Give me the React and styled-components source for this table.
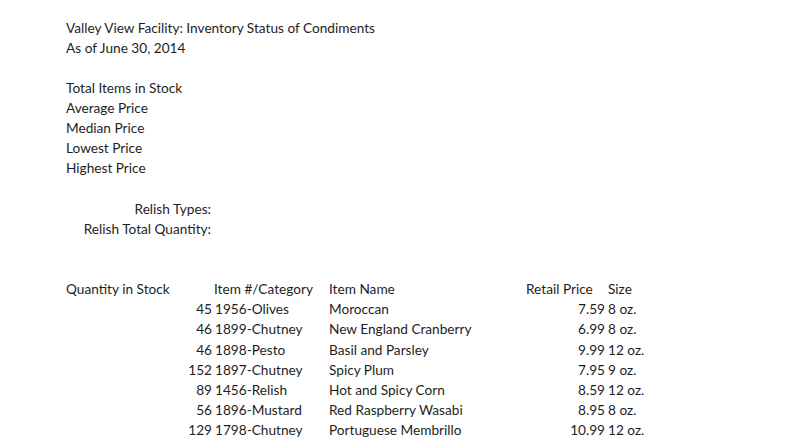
import React from "react";
import styled, { createGlobalStyle } from "styled-components";

const GlobalStyle = createGlobalStyle`
  body {
    margin: 0;
    background: #fff;
    font-family: Lato, "Open Sans", sans-serif;
    font-size: 13.65px;
    color: #1e1e1e;
  }
`;

const items = [
  { qty: 45, num: "1956-Olives", name: "Moroccan", price: "7.59", size: "8 oz." },
  { qty: 46, num: "1899-Chutney", name: "New England Cranberry", price: "6.99", size: "8 oz." },
  { qty: 46, num: "1898-Pesto", name: "Basil and Parsley", price: "9.99", size: "12 oz." },
  { qty: 152, num: "1897-Chutney", name: "Spicy Plum", price: "7.95", size: "9 oz." },
  { qty: 89, num: "1456-Relish", name: "Hot and Spicy Corn", price: "8.59", size: "12 oz." },
  { qty: 56, num: "1896-Mustard", name: "Red Raspberry Wasabi", price: "8.95", size: "8 oz." },
  { qty: 129, num: "1798-Chutney", name: "Portuguese Membrillo", price: "10.99", size: "12 oz." },
  { qty: 74, num: "1895-Relish", name: "Sweet Pepper and Onion", price: "6.59", size: "8 oz." },
];

const Page = styled.div`
  padding: 18px 0 0 66px;
  height: 446px;
  box-sizing: border-box;
  overflow: hidden;
`;

const Line = styled.div`
  line-height: 20px;
  height: 20px;
  white-space: nowrap;
`;

const Block = styled.div`
  margin-bottom: 20px;
`;

const LabelGrid = styled.div`
  display: grid;
  grid-template-columns: 145px;
  padding-top: 1px;
  margin-bottom: 40px;
`;

const Label = styled(Line)`
  text-align: right;
`;

const Table = styled.div`
  display: grid;
  grid-template-columns: 146px 117px 197px 79px 60px;
`;

const Cell = styled.div`
  line-height: 20.2px;
  white-space: nowrap;
  text-align: ${({ right }) => (right ? "right" : "left")};
  padding-left: ${({ pl }) => pl || 0}px;
`;

export default function App() {
  return (
    <>
      <GlobalStyle />
      <Page>
        <Block>
          <Line>Valley View Facility: Inventory Status of Condiments</Line>
          <Line>As of June 30, 2014</Line>
        </Block>
        <Block>
          <Line>Total Items in Stock</Line>
          <Line>Average Price</Line>
          <Line>Median Price</Line>
          <Line>Lowest Price</Line>
          <Line>Highest Price</Line>
        </Block>
        <LabelGrid>
          <Label>Relish Types:</Label>
          <Label>Relish Total Quantity:</Label>
        </LabelGrid>
        <Table>
          <Cell>Quantity in Stock</Cell>
          <Cell pl={2}>Item #/Category</Cell>
          <Cell>Item Name</Cell>
          <Cell>Retail Price</Cell>
          <Cell pl={3}>Size</Cell>
          {items.map((it) => (
            <React.Fragment key={it.num}>
              <Cell right>{it.qty}</Cell>
              <Cell pl={3}>{it.num}</Cell>
              <Cell>{it.name}</Cell>
              <Cell right>{it.price}</Cell>
              <Cell pl={3}>{it.size}</Cell>
            </React.Fragment>
          ))}
        </Table>
      </Page>
    </>
  );
}
